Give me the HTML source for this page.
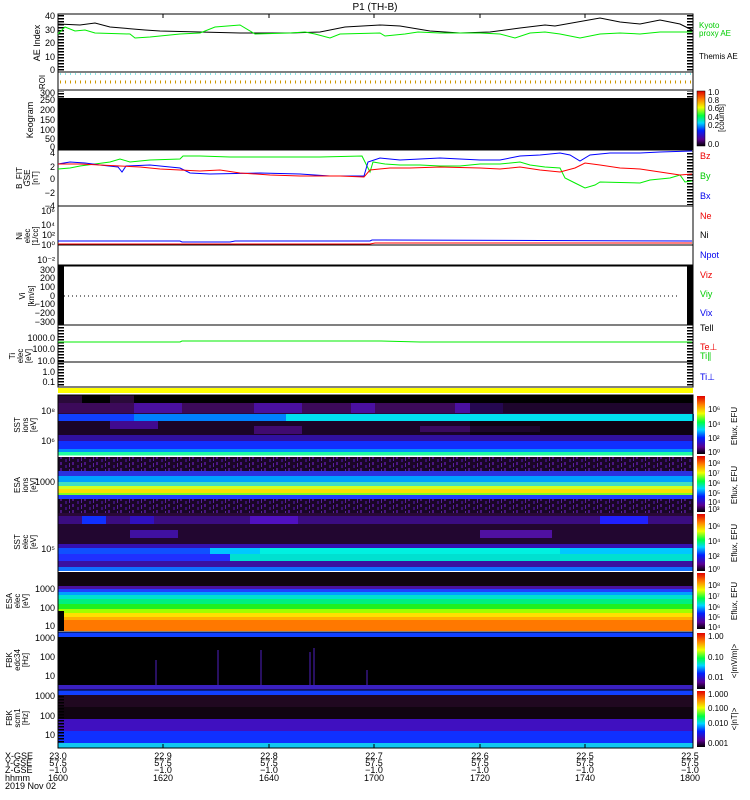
<!DOCTYPE html>
<html><head><meta charset="utf-8"><style>
body{margin:0;background:#fff;}
svg{display:block;font-family:"Liberation Sans",sans-serif;}
</style></head><body>
<svg width="750" height="800" viewBox="0 0 750 800" xmlns="http://www.w3.org/2000/svg">
<defs>
<linearGradient id="cb" x1="0" y1="1" x2="0" y2="0">
<stop offset="0" stop-color="#000"/><stop offset="0.12" stop-color="#5a0090"/><stop offset="0.28" stop-color="#0020ff"/><stop offset="0.42" stop-color="#00d8ff"/><stop offset="0.55" stop-color="#00ff40"/><stop offset="0.7" stop-color="#f0ff00"/><stop offset="0.85" stop-color="#ff8000"/><stop offset="1" stop-color="#e00000"/>
</linearGradient>
<pattern id="ticks" width="6" height="3" patternUnits="userSpaceOnUse"><rect width="6" height="1.5" fill="#000"/></pattern>
<pattern id="noise" width="12" height="6" patternUnits="userSpaceOnUse"><rect width="12" height="6" fill="#1a0626"/><rect x="0" y="0" width="2" height="3" fill="#4a1480"/><rect x="5" y="3" width="2" height="3" fill="#3a1070"/><rect x="9" y="1" width="1" height="4" fill="#5a20a0"/></pattern>
</defs>
<rect width="750" height="800" fill="#fff"/>
<text x="375" y="10" font-size="10" text-anchor="middle">P1  (TH-B)</text>

<!-- AE panel -->
<rect x="58" y="14" width="635" height="58" fill="#fff" stroke="#000"/>
<rect x="58" y="15" width="6" height="56" fill="url(#ticks)"/>
<rect x="687" y="15" width="6" height="56" fill="url(#ticks)"/>
<polyline fill="none" stroke="#000" stroke-width="1" points="58,24 80,25 95,23 110,27 145,30 160,31 200,32 240,33 290,33 320,32 345,27 380,25 400,26 430,31 460,33 490,32 520,28 545,25 555,26 600,18 620,22 640,24 660,20 680,24 692,30"/>
<polyline fill="none" stroke="#0e0" stroke-width="1" points="58,34 65,27 75,31 85,30 95,33 130,34 135,38 150,37 180,34 200,33 215,27 240,25 255,34 290,33 305,32 315,34 330,38 340,34 380,33 385,36 405,34 418,32 440,33 480,33 500,34 515,38 530,33 545,32 560,34 580,38 600,34 620,33 640,34 660,32 692,32"/>
<g font-size="9" text-anchor="end">
<text x="55" y="19">40</text><text x="55" y="33">30</text><text x="55" y="46">20</text><text x="55" y="60">10</text><text x="55" y="73">0</text>
</g>
<text transform="translate(40,43) rotate(-90)" font-size="9" text-anchor="middle">AE Index</text>
<text x="699" y="28" font-size="8" fill="#0c0">Kyoto</text>
<text x="699" y="36" font-size="8" fill="#0c0">proxy AE</text>
<text x="699" y="59" font-size="8">Themis AE</text>

<!-- ROI -->
<rect x="58" y="72" width="635" height="18" fill="#fff" stroke="#000"/>
<line x1="60" y1="74" x2="692" y2="74" stroke="#0cc" stroke-dasharray="1,4"/>
<line x1="60" y1="82" x2="692" y2="82" stroke="#c90" stroke-width="3" stroke-dasharray="1,4"/>
<text transform="translate(45,82) rotate(-90)" font-size="8" text-anchor="middle">ROI</text>

<!-- Keogram -->
<rect x="58" y="90" width="635" height="60" fill="#fff" stroke="#000"/>
<rect x="58" y="98" width="635" height="52" fill="#000"/>
<rect x="58" y="91" width="6" height="7" fill="url(#ticks)"/>
<rect x="687" y="91" width="6" height="7" fill="url(#ticks)"/>
<g font-size="9" text-anchor="end">
<text x="55" y="96">300</text><text x="55" y="103">250</text><text x="55" y="113">200</text><text x="55" y="123">150</text><text x="55" y="133">100</text><text x="55" y="142">50</text><text x="55" y="150">0</text>
</g>
<text transform="translate(33,120) rotate(-90)" font-size="9" text-anchor="middle">Keogram</text>
<rect x="697" y="91" width="8" height="55" fill="url(#cb)" stroke="#000" stroke-width="0.5"/>
<g font-size="8"><text x="708" y="95">1.0</text><text x="708" y="103">0.8</text><text x="708" y="111">0.6</text><text x="708" y="120">0.4</text><text x="708" y="128">0.2</text><text x="708" y="147">0.0</text></g>
<text transform="translate(724,118) rotate(-90)" font-size="8" text-anchor="middle">[counts]</text>

<!-- B FIT -->
<rect x="58" y="150" width="635" height="56" fill="#fff" stroke="#000"/>
<rect x="687" y="151" width="6" height="54" fill="url(#ticks)"/>
<polyline fill="none" stroke="#0e0" points="58,169 70,168 80,166 95,164 110,162 120,159 130,162 150,160 180,159 183,156 200,156 230,157 250,157 290,157 320,157 362,156 365,162 370,172 373,162 385,164 400,165 420,165 440,166 460,166 480,164 500,164 520,162 530,165 545,167 560,168 565,178 575,183 585,188 595,185 600,182 640,183 650,180 670,178 680,175 685,182 692,181"/>
<polyline fill="none" stroke="#00f" points="58,164 70,162 85,163 100,165 118,167 122,172 126,166 150,165 170,167 180,168 190,173 210,174 260,173 300,174 330,176 364,176 368,162 380,158 400,160 440,158 460,159 480,160 500,160 520,156 540,155 560,153 570,155 580,161 590,155 610,153 640,153 660,152 692,151"/>
<polyline fill="none" stroke="#f00" points="58,164 80,164 100,165 120,166 140,167 160,169 180,170 200,171 220,170 240,173 270,175 300,176 340,176 364,177 370,170 390,168 410,168 440,167 480,168 500,169 520,167 540,170 560,172 575,168 585,163 600,165 620,168 640,169 660,172 680,175 692,174"/>
<g font-size="9" text-anchor="end">
<text x="55" y="156">4</text><text x="55" y="170">2</text><text x="55" y="182">0</text><text x="55" y="196">−2</text><text x="55" y="209">−4</text>
</g>
<text transform="translate(22,178) rotate(-90)" font-size="8" text-anchor="middle">B_FIT</text>
<text transform="translate(30,178) rotate(-90)" font-size="8" text-anchor="middle">GSE</text>
<text transform="translate(38,178) rotate(-90)" font-size="8" text-anchor="middle">[nT]</text>
<text x="700" y="159" font-size="9" fill="#e00">Bz</text>
<text x="700" y="179" font-size="9" fill="#0c0">By</text>
<text x="700" y="199" font-size="9" fill="#00e">Bx</text>

<!-- Ni -->
<rect x="58" y="206" width="635" height="59" fill="#fff" stroke="#000"/>
<line x1="58" y1="245" x2="693" y2="245" stroke="#000"/>
<polyline fill="none" stroke="#00f" points="58,241 180,241 182,242 230,242 235,241 370,241 372,240 692,241"/>
<polyline fill="none" stroke="#f00" points="58,244 370,244 375,243 692,243"/>
<g font-size="9" text-anchor="end">
<text x="55" y="214">10⁶</text><text x="55" y="228">10⁴</text><text x="55" y="238">10²</text><text x="55" y="248">10⁰</text><text x="55" y="263">10⁻²</text>
</g>
<text transform="translate(22,236) rotate(-90)" font-size="8" text-anchor="middle">Ni</text>
<text transform="translate(30,236) rotate(-90)" font-size="8" text-anchor="middle">elec</text>
<text transform="translate(38,236) rotate(-90)" font-size="8" text-anchor="middle">[1/cc]</text>
<text x="700" y="219" font-size="9" fill="#e00">Ne</text>
<text x="700" y="238" font-size="9">Ni</text>
<text x="700" y="258" font-size="9" fill="#00e">Npot</text>

<!-- V -->
<rect x="58" y="266" width="635" height="59" fill="#fff" stroke="#000"/>
<rect x="58" y="266" width="6" height="59" fill="#000"/>
<rect x="687" y="266" width="6" height="59" fill="#000"/>
<line x1="64" y1="296" x2="680" y2="296" stroke="#000" stroke-dasharray="1,3"/>
<g font-size="9" text-anchor="end">
<text x="55" y="273">300</text><text x="55" y="281">200</text><text x="55" y="290">100</text><text x="55" y="299">0</text><text x="55" y="307">−100</text><text x="55" y="316">−200</text><text x="55" y="325">−300</text>
</g>
<text transform="translate(25,296) rotate(-90)" font-size="8" text-anchor="middle">Vi</text>
<text transform="translate(34,296) rotate(-90)" font-size="8" text-anchor="middle">[km/s]</text>
<text x="700" y="278" font-size="9" fill="#e00">Viz</text>
<text x="700" y="297" font-size="9" fill="#0c0">Viy</text>
<text x="700" y="316" font-size="9" fill="#00e">Vix</text>

<!-- T -->
<rect x="58" y="325" width="635" height="62" fill="#fff" stroke="#000"/>
<rect x="58" y="326" width="6" height="60" fill="url(#ticks)"/>
<rect x="687" y="326" width="6" height="60" fill="url(#ticks)"/>
<line x1="58" y1="362" x2="693" y2="362" stroke="#000"/>
<polyline fill="none" stroke="#0e0" points="58,342 180,342 182,341 380,341 420,342 692,342"/>
<g font-size="9" text-anchor="end">
<text x="55" y="341">1000.0</text><text x="55" y="352">100.0</text><text x="55" y="364">10.0</text><text x="55" y="375">1.0</text><text x="55" y="385">0.1</text>
</g>
<text transform="translate(15,356) rotate(-90)" font-size="8" text-anchor="middle">Ti</text>
<text transform="translate(23,356) rotate(-90)" font-size="8" text-anchor="middle">elec</text>
<text transform="translate(31,356) rotate(-90)" font-size="8" text-anchor="middle">[eV]</text>
<text x="700" y="331" font-size="9">Tell</text>
<text x="700" y="350" font-size="9" fill="#e00">Te⊥</text>
<text x="700" y="359" font-size="9" fill="#0c0">Ti∥</text>
<text x="700" y="380" font-size="9" fill="#00e">Ti⊥</text>

<rect x="58" y="388" width="635" height="5" fill="#ff0"/>

<!-- SST ions -->
<rect x="58" y="395" width="635" height="61" fill="#2a0a3a"/>
<rect x="58" y="395" width="635" height="8" fill="#000"/>
<rect x="58" y="395" width="24" height="8" fill="#2a0a3a"/><rect x="110" y="395" width="24" height="8" fill="#2a0a3a"/>
<rect x="58" y="403" width="635" height="10" fill="#3c0a5a"/>
<rect x="134" y="403" width="48" height="10" fill="#4a10a0"/><rect x="254" y="403" width="48" height="10" fill="#4a10a0"/><rect x="351" y="403" width="24" height="10" fill="#4a10a0"/><rect x="455" y="403" width="48" height="10" fill="#4a10a0"/>
<rect x="58" y="414" width="635" height="7" fill="#1040ff"/>
<rect x="134" y="414" width="560" height="7" fill="#0080ff"/>
<rect x="286" y="414" width="407" height="7" fill="#00e0f0"/>
<rect x="58" y="421" width="635" height="14" fill="#1a0428"/>
<rect x="110" y="421" width="48" height="8" fill="#400a90"/>
<rect x="254" y="426" width="48" height="8" fill="#400a70"/>
<rect x="420" y="426" width="120" height="6" fill="#3a0a60"/>
<rect x="58" y="435" width="635" height="6" fill="#3010a0"/>
<rect x="58" y="441" width="635" height="8" fill="#1030ff"/>
<rect x="58" y="449" width="635" height="3" fill="#0090ff"/>
<rect x="58" y="452" width="635" height="4" fill="#20ffa0"/>
<rect x="470" y="395" width="223" height="18" fill="#000" opacity="0.5"/>
<rect x="470" y="421" width="223" height="14" fill="#000" opacity="0.5"/>
<line x1="58" y1="456" x2="693" y2="456" stroke="#fff"/>

<!-- ESA ions -->
<rect x="58" y="457" width="635" height="56" fill="url(#noise)"/>
<rect x="58" y="471" width="635" height="5" fill="#2a30e0"/>
<rect x="58" y="476" width="635" height="6" fill="#00a0ff"/>
<rect x="58" y="482" width="635" height="4" fill="#40e0c0"/>
<rect x="58" y="486" width="635" height="3" fill="#d0ff20"/>
<rect x="58" y="489" width="635" height="4" fill="#f8e000"/>
<rect x="58" y="493" width="635" height="2" fill="#80ff20"/>
<rect x="58" y="495" width="635" height="4" fill="#2040ff"/>

<!-- SST elec -->
<rect x="58" y="513" width="635" height="58" fill="#2a0838"/>
<rect x="58" y="516" width="635" height="8" fill="#3a0c80"/>
<rect x="82" y="516" width="24" height="8" fill="#1030ff"/><rect x="130" y="516" width="24" height="8" fill="#3010c0"/><rect x="250" y="516" width="48" height="8" fill="#5010c0"/><rect x="600" y="516" width="48" height="8" fill="#2020ff"/>
<rect x="58" y="524" width="635" height="20" fill="#220630"/>
<rect x="130" y="530" width="48" height="8" fill="#4010a0"/><rect x="480" y="530" width="72" height="8" fill="#5010a0"/>
<rect x="58" y="544" width="635" height="4" fill="#3410b0"/>
<rect x="58" y="548" width="635" height="6" fill="#1050ff"/>
<rect x="210" y="548" width="483" height="6" fill="#00c8ff"/>
<rect x="260" y="548" width="300" height="6" fill="#00f0e0"/>
<rect x="58" y="554" width="635" height="7" fill="#2030ff"/>
<rect x="230" y="554" width="463" height="7" fill="#00e0d0"/>
<rect x="58" y="561" width="635" height="6" fill="#3a10a0"/>
<rect x="58" y="567" width="635" height="4" fill="#1070ff"/>

<!-- ESA elec -->
<rect x="58" y="572" width="635" height="59" fill="#100410"/>
<rect x="58" y="586" width="635" height="3" fill="#4a10a0"/>
<rect x="58" y="589" width="635" height="3" fill="#2040ff"/>
<rect x="58" y="592" width="635" height="3" fill="#00a0ff"/>
<rect x="58" y="595" width="635" height="4" fill="#00e0d0"/>
<rect x="58" y="599" width="635" height="5" fill="#00f080"/>
<rect x="58" y="604" width="635" height="5" fill="#20f020"/>
<rect x="58" y="609" width="635" height="4" fill="#a0ff00"/>
<rect x="58" y="613" width="635" height="4" fill="#ffe000"/>
<rect x="58" y="617" width="635" height="3" fill="#ffb000"/>
<rect x="58" y="620" width="635" height="11" fill="#ff7800"/>
<rect x="58" y="611" width="6" height="20" fill="#000"/>

<!-- FBK 1 -->
<rect x="58" y="632" width="635" height="58" fill="#000"/>
<rect x="58" y="632" width="635" height="5" fill="#1040ff"/>
<rect x="58" y="685" width="635" height="5" fill="#3a20c0"/>
<g stroke="#5020c0" stroke-width="1">
<line x1="156" y1="660" x2="156" y2="685"/><line x1="218" y1="650" x2="218" y2="685"/><line x1="261" y1="650" x2="261" y2="685"/><line x1="310" y1="652" x2="310" y2="685"/><line x1="314" y1="648" x2="314" y2="685"/><line x1="367" y1="670" x2="367" y2="685"/>
</g>

<!-- FBK 2 -->
<rect x="58" y="690" width="635" height="58" fill="#000"/>
<rect x="58" y="690" width="635" height="5" fill="#1040ff"/>
<rect x="58" y="695" width="635" height="12" fill="#200820"/>
<rect x="58" y="707" width="635" height="12" fill="#100410"/>
<rect x="58" y="719" width="635" height="12" fill="#4010c0"/>
<rect x="58" y="731" width="635" height="12" fill="#1030ff"/>
<rect x="58" y="743" width="635" height="5" fill="#10c8f0"/>
<rect x="58" y="695" width="6" height="48" fill="url(#ticks)"/>

<!-- axis frame lines for lower panels -->
<g fill="none" stroke="#000">
<rect x="58" y="395" width="635" height="353"/>
<line x1="58" y1="632" x2="693" y2="632"/>
<line x1="58" y1="690" x2="693" y2="690"/>
</g>
<!-- time ticks -->
<g stroke="#000">
<line x1="163" y1="14" x2="163" y2="18"/><line x1="269" y1="14" x2="269" y2="18"/><line x1="374" y1="14" x2="374" y2="18"/><line x1="480" y1="14" x2="480" y2="18"/><line x1="585" y1="14" x2="585" y2="18"/>
<line x1="163" y1="744" x2="163" y2="748"/><line x1="269" y1="744" x2="269" y2="748"/><line x1="374" y1="744" x2="374" y2="748"/><line x1="480" y1="744" x2="480" y2="748"/><line x1="585" y1="744" x2="585" y2="748"/>
</g>

<!-- lower panel labels -->
<g font-size="9" text-anchor="end">
<text x="55" y="414">10⁸</text><text x="55" y="444">10⁶</text>
<text x="55" y="485">1000</text>
<text x="55" y="552">10⁵</text>
<text x="55" y="592">1000</text><text x="55" y="611">100</text><text x="55" y="629">10</text>
<text x="55" y="641">1000</text><text x="55" y="660">100</text><text x="55" y="679">10</text>
<text x="55" y="699">1000</text><text x="55" y="719">100</text><text x="55" y="738">10</text>
</g>
<g font-size="8" text-anchor="middle">
<text transform="translate(20,425) rotate(-90)">SST</text><text transform="translate(28,425) rotate(-90)">ions</text><text transform="translate(36,425) rotate(-90)">[eV]</text>
<text transform="translate(20,485) rotate(-90)">ESA</text><text transform="translate(28,485) rotate(-90)">ions</text><text transform="translate(36,485) rotate(-90)">[eV]</text>
<text transform="translate(20,542) rotate(-90)">SST</text><text transform="translate(28,542) rotate(-90)">elec</text><text transform="translate(36,542) rotate(-90)">[eV]</text>
<text transform="translate(12,601) rotate(-90)">ESA</text><text transform="translate(20,601) rotate(-90)">elec</text><text transform="translate(28,601) rotate(-90)">[eV]</text>
<text transform="translate(12,660) rotate(-90)">FBK</text><text transform="translate(20,660) rotate(-90)">edc34</text><text transform="translate(28,660) rotate(-90)">[Hz]</text>
<text transform="translate(12,718) rotate(-90)">FBK</text><text transform="translate(20,718) rotate(-90)">scm1</text><text transform="translate(28,718) rotate(-90)">[Hz]</text>
</g>

<!-- colorbars -->
<rect x="697" y="396" width="8" height="58" fill="url(#cb)"/>
<rect x="697" y="456" width="8" height="56" fill="url(#cb)"/>
<rect x="697" y="514" width="8" height="57" fill="url(#cb)"/>
<rect x="697" y="573" width="8" height="56" fill="url(#cb)"/>
<rect x="697" y="633" width="8" height="56" fill="url(#cb)"/>
<rect x="697" y="691" width="8" height="56" fill="url(#cb)"/>
<g font-size="8">
<text x="708" y="412">10⁶</text><text x="708" y="427">10⁴</text><text x="708" y="441">10²</text><text x="708" y="455">10⁰</text>
<text x="708" y="466">10⁸</text><text x="708" y="476">10⁷</text><text x="708" y="486">10⁶</text><text x="708" y="496">10⁵</text><text x="708" y="505">10⁴</text><text x="708" y="512">10³</text>
<text x="708" y="529">10⁶</text><text x="708" y="544">10⁴</text><text x="708" y="559">10²</text><text x="708" y="572">10⁰</text>
<text x="708" y="588">10⁸</text><text x="708" y="599">10⁷</text><text x="708" y="610">10⁶</text><text x="708" y="620">10⁵</text><text x="708" y="630">10⁴</text>
<text x="708" y="639">1.00</text><text x="708" y="660">0.10</text><text x="708" y="680">0.01</text>
<text x="708" y="697">1.000</text><text x="708" y="711">0.100</text><text x="708" y="726">0.010</text><text x="708" y="746">0.001</text>
</g>
<g font-size="8" text-anchor="middle">
<text transform="translate(737,426) rotate(-90)">Eflux, EFU</text>
<text transform="translate(737,485) rotate(-90)">Eflux, EFU</text>
<text transform="translate(737,543) rotate(-90)">Eflux, EFU</text>
<text transform="translate(737,601) rotate(-90)">Eflux, EFU</text>
<text transform="translate(737,661) rotate(-90)">&lt;|mV/m|&gt;</text>
<text transform="translate(737,719) rotate(-90)">&lt;|nT|&gt;</text>
</g>

<!-- bottom labels -->
<g font-size="9">
<text x="5" y="759">X-GSE</text><text x="5" y="766">Y-GSE</text><text x="5" y="773">Z-GSE</text><text x="5" y="781">hhmm</text><text x="5" y="789">2019 Nov 02</text>
</g>
<g font-size="9" text-anchor="middle">
<text x="58" y="759">23.0</text><text x="58" y="766">57.5</text><text x="58" y="773">−1.0</text><text x="58" y="781">1600</text>
<text x="163" y="759">22.9</text><text x="163" y="766">57.5</text><text x="163" y="773">−1.0</text><text x="163" y="781">1620</text>
<text x="269" y="759">22.8</text><text x="269" y="766">57.5</text><text x="269" y="773">−1.0</text><text x="269" y="781">1640</text>
<text x="374" y="759">22.7</text><text x="374" y="766">57.5</text><text x="374" y="773">−1.0</text><text x="374" y="781">1700</text>
<text x="480" y="759">22.6</text><text x="480" y="766">57.5</text><text x="480" y="773">−1.0</text><text x="480" y="781">1720</text>
<text x="585" y="759">22.5</text><text x="585" y="766">57.5</text><text x="585" y="773">−1.0</text><text x="585" y="781">1740</text>
<text x="690" y="759">22.5</text><text x="690" y="766">57.5</text><text x="690" y="773">−1.0</text><text x="690" y="781">1800</text>
</g>
</svg>
</body></html>
